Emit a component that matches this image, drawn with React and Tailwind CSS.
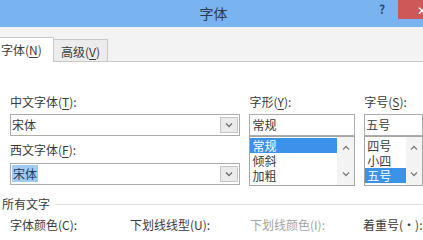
import React from 'react';

// Word "字体" dialog, cropped top-left area
function Chevron({ up = false, color = '#6f6f6f' }) {
  return (
    <svg width="8" height="5" viewBox="0 0 8 5">
      <polyline
        points={up ? '1,4.5 4,1.5 7,4.5' : '1,0.5 4,3.5 7,0.5'}
        fill="none"
        stroke={color}
        strokeWidth="1.3"
      />
    </svg>
  );
}

function Key({ k }) {
  return (
    <span>
      (<span className="underline underline-offset-2">{k}</span>):
    </span>
  );
}

function Label({ text, k, gray = false }) {
  return (
    <div className={`h-[16px] leading-[16px] text-[12px] whitespace-nowrap ${gray ? 'text-[#a3a3a3]' : 'text-[#3a3a3a]'}`}>
      {text}
      <Key k={k} />
    </div>
  );
}

function Combo({ children }) {
  return (
    <div className="h-[22px] border border-[#acacac] bg-white flex items-center">
      <div className="flex-1 pl-[1px] text-[12px] text-[#3a3a3a] leading-[16px]">{children}</div>
      <div className="w-[18px] h-[16px] mr-[1px] bg-[#ebebeb] border border-[#c6c6c6] flex items-center justify-center">
        <Chevron />
      </div>
    </div>
  );
}

function ListBox({ items, selected, scrollW }) {
  return (
    <div className="h-[50px] border border-[#a6a6a6] bg-white flex">
      <div className="flex-1 pt-[1px]">
        {items.map(it => (
          <div key={it} className="h-[15px] flex">
            <div
              className={`pl-[2px] leading-[15px] text-[12px] ${it === selected ? 'bg-[#3c92e9] text-white' : 'text-[#3a3a3a]'}`}
              style={{ width: 'calc(100% - 0px)' }}
            >
              {it}
            </div>
          </div>
        ))}
      </div>
      <div className={`${scrollW} bg-[#f3f3f3] flex flex-col items-center justify-between py-[8px]`}>
        <Chevron up color="#7d7d7d" />
        <Chevron color="#7d7d7d" />
      </div>
    </div>
  );
}

export default function App() {
  return (
    <div className="w-[423px] h-[232px] overflow-hidden bg-white font-['Noto_Sans_CJK_SC',sans-serif] text-[#3a3a3a]">
      {/* Title bar */}
      <div className="relative h-[27px] bg-[#7ab4f0] flex items-center justify-center">
        <span className="text-[14px] text-[#2f3b4a] pl-[4px] leading-[27px]">字体</span>
        <span className="absolute left-[379px] top-[0px] text-[12px] font-bold text-[#2e4b70] leading-[18px]">?</span>
        <div className="absolute left-[398px] top-0 w-[30px] h-[19px] bg-[#cd5858] flex items-center pl-[19px]">
          <span className="text-white text-[12px] leading-none">✕</span>
        </div>
      </div>

      {/* Tabs */}
      <div className="h-[35px] bg-[#f3f3f3] border-b border-[#c9c9c9] flex items-end">
        <div className="w-[54px] h-[25px] mb-[-1px] bg-white border-t border-r border-[#c9c9c9] flex items-center pl-[1px] text-[12px] whitespace-nowrap">
          字体(<span className="underline underline-offset-2">N</span>)
        </div>
        <div className="w-[54px] h-[22px] bg-[#ececec] border-t border-r border-[#c9c9c9] flex items-center justify-center pt-[3px] text-[12px] whitespace-nowrap">
          高级(<span className="underline underline-offset-2">V</span>)
        </div>
      </div>

      {/* Content */}
      <div className="pt-[32px]">
        <div className="flex pl-[10px]">
          <div className="w-[231px] flex flex-col">
            <Label text="中文字体" k="T" />
            <div className="mt-[4px]">
              <Combo>宋体</Combo>
            </div>
            <div className="mt-[6px]">
              <Label text="西文字体" k="F" />
            </div>
            <div className="mt-[5px]">
              <Combo>
                <span className="bg-[#9fcbf1] text-[#1d3c66] px-[1px]">宋体</span>
              </Combo>
            </div>
          </div>

          <div className="w-[106px] ml-[9px] flex flex-col">
            <Label text="字形" k="Y" />
            <div className="mt-[4px] h-[22px] border border-[#acacac] pl-[2px] text-[12px] leading-[20px]">常规</div>
            <ListBox items={['常规', '倾斜', '加粗']} selected="常规" scrollW="w-[17px]" />
          </div>

          <div className="w-[59px] ml-[9px] flex flex-col">
            <Label text="字号" k="S" />
            <div className="mt-[4px] h-[22px] border border-[#acacac] pl-[1px] text-[12px] leading-[20px]">五号</div>
            <ListBox items={['四号', '小四', '五号']} selected="五号" scrollW="w-[16px]" />
          </div>
        </div>

        <div className="mt-[10px] h-[16px] flex items-center pl-[2px]">
          <span className="text-[12px] leading-[16px]">所有文字</span>
          <div className="flex-1 h-px bg-[#dedede] ml-[5px]" />
        </div>

        <div className="mt-[5px] flex pl-[10px]">
          <div className="w-[120px]"><Label text="字体颜色" k="C" /></div>
          <div className="w-[120px]"><Label text="下划线线型" k="U" /></div>
          <div className="w-[113px]"><Label text="下划线颜色" k="I" gray /></div>
          <div><Label text="着重号" k="·" /></div>
        </div>
      </div>
    </div>
  );
}
